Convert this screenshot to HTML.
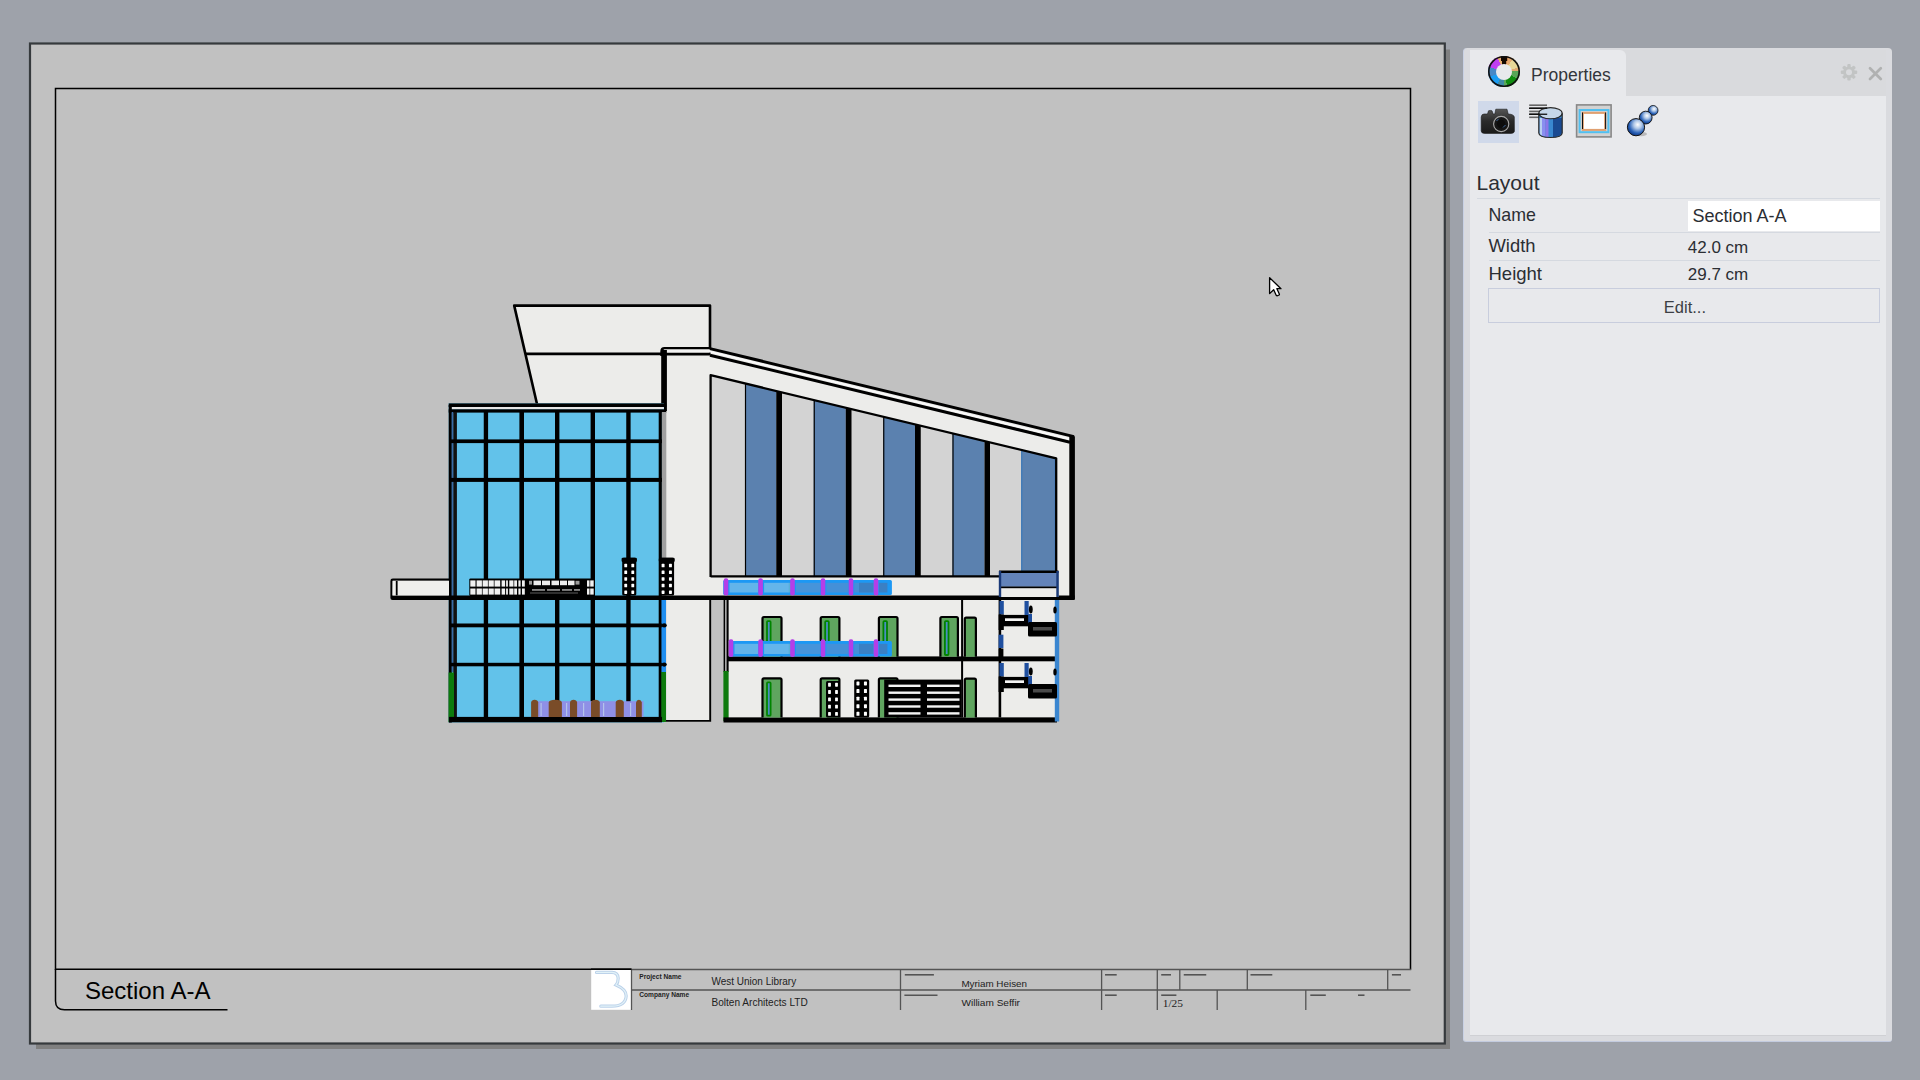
<!DOCTYPE html>
<html><head><meta charset="utf-8">
<style>
html,body{margin:0;padding:0;}
body{width:1920px;height:1080px;overflow:hidden;background:#9ea2aa;position:relative;font-family:"Liberation Sans",sans-serif;}
.abs{position:absolute;}
#panel{left:1463px;top:48px;width:428px;height:993px;background:#dadbdf;border-radius:4px 4px 3px 3px;border-left:1px solid #c9d1e4;border-bottom:1.5px solid #c3cbdf;}
#tabbar{left:1470px;top:50px;width:416px;height:46px;background:#d9dadd;}
#tab{left:1470px;top:50px;width:156px;height:46px;background:#e8e9ec;border-radius:0 6px 0 0;}
#content{left:1470px;top:96px;width:416px;height:939px;background:#e8e9ec;box-shadow:0 1px 0 #cfd0d4;}
.t{position:absolute;white-space:nowrap;color:#2b2e33;}
</style></head>
<body>
<svg class="abs" style="left:0;top:0" width="1920" height="1080" viewBox="0 0 1920 1080">
  <!-- paper shadow -->
  <rect x="36" y="49.5" width="1414" height="999.5" fill="#808080"/>
  <!-- paper -->
  <rect x="30" y="43.5" width="1414.8" height="1000" fill="#c1c1c1" stroke="#363a3d" stroke-width="2.2"/>
  <!-- inner frame -->
  <path d="M631.5 969.2 H55.5 V88.5 H1410.5 V969.6" fill="none" stroke="#000" stroke-width="1.5"/>
  <g id="building">
<path d="M514.2 305.6 L710 305.6 L710 352 L662 352 L662 405 L537 405 Z" fill="#ececea"/>
<path d="M537 404 L514.2 305.6 L710 305.6 L710 349" fill="none" stroke="#000" stroke-width="2.6" stroke-linejoin="round"/>
<path d="M525.2 353.8 L662 353.8" stroke="#000" stroke-width="2.8"/>
<path d="M662 349 L710 349 L1073.8 436.6 L1073.8 598 L662 598 Z" fill="#ececea"/>
<path d="M710.6 375.2 L1056.2 458.3 L1056.2 576.3 L710.6 576.3 Z" fill="#d3d3d3"/>
<path d="M745 383.47 L776.25 390.99 L776.25 576.3 L745 576.3 Z" fill="#5b81af"/>
<path d="M745.5 383.47 V576.3" stroke="#000" stroke-width="1.2"/>
<path d="M813.75 400.00 L845.75 407.70 L845.75 576.3 L813.75 576.3 Z" fill="#5b81af"/>
<path d="M814.25 400.00 V576.3" stroke="#000" stroke-width="1.2"/>
<path d="M883.25 416.71 L915 424.35 L915 576.3 L883.25 576.3 Z" fill="#5b81af"/>
<path d="M883.75 416.71 V576.3" stroke="#000" stroke-width="1.2"/>
<path d="M952.5 433.37 L984.5 441.06 L984.5 576.3 L952.5 576.3 Z" fill="#5b81af"/>
<path d="M953.0 433.37 V576.3" stroke="#000" stroke-width="1.2"/>
<path d="M1021.25 449.90 L1055.2 458.06 L1055.2 576.3 L1021.25 576.3 Z" fill="#5b81af"/>
<path d="M1021.75 449.90 V576.3" stroke="#3a78b8" stroke-width="1.2"/>
<path d="M776.25 390.99 L782 392.37 L782 576.3 L776.25 576.3 Z" fill="#000"/>
<path d="M845.75 407.70 L851.5 409.08 L851.5 576.3 L845.75 576.3 Z" fill="#000"/>
<path d="M915 424.35 L920.75 425.73 L920.75 576.3 L915 576.3 Z" fill="#000"/>
<path d="M984.5 441.06 L990 442.38 L990 576.3 L984.5 576.3 Z" fill="#000"/>
<path d="M1055.4 458.01 V576" stroke="#2f6fb8" stroke-width="1.4"/>
<path d="M710.6 577 V375.2 L1056.2 458.3 L1056.2 576.3 L710.6 576.3" fill="none" stroke="#000" stroke-width="2.3" stroke-linejoin="round"/>
<path d="M710 348.6 L1074 436.6" stroke="#000" stroke-width="3"/>
<path d="M710 355.2 L1070 442.2" stroke="#000" stroke-width="3"/>
<path d="M710.3 351.8 L1070 439.2" stroke="#fafafa" stroke-width="1.8"/>
<path d="M1072.1 436.2 V599" stroke="#000" stroke-width="5.6"/>
<path d="M711 348.3 H664.5 Q661.5 348.3 661.5 351.5 V356" fill="none" stroke="#000" stroke-width="2.4"/>
<path d="M662 353.9 H710.5" stroke="#000" stroke-width="3"/>
<rect x="663.5" y="349.5" width="46.5" height="2.9" rx="1.2" fill="#f2f2f2"/>
<rect x="661.20" y="350.00" width="5.70" height="61.00" fill="#000" />
<rect x="448.70" y="403.30" width="215.30" height="319.20" fill="#62c2ea" />
<rect x="448.70" y="403.40" width="217.60" height="3.60" fill="#000" />
<rect x="451.20" y="407.00" width="212.60" height="2.40" fill="#e6e6e6" />
<rect x="448.70" y="409.30" width="217.60" height="3.30" fill="#000" />
<rect x="448.70" y="405.00" width="3.10" height="317.50" fill="#000" />
<rect x="451.80" y="412.00" width="1.50" height="260.00" fill="#3a6aa8" />
<rect x="453.30" y="412.00" width="3.60" height="310.00" fill="#111" />
<rect x="483.75" y="412.00" width="4.35" height="310.00" fill="#000" />
<rect x="519.40" y="412.00" width="4.60" height="310.00" fill="#000" />
<rect x="555.00" y="412.00" width="4.40" height="310.00" fill="#000" />
<rect x="590.60" y="412.00" width="4.40" height="310.00" fill="#000" />
<rect x="626.25" y="412.00" width="4.35" height="310.00" fill="#000" />
<rect x="658.70" y="412.00" width="3.20" height="310.00" fill="#000" />
<rect x="661.90" y="412.00" width="4.40" height="185.00" fill="#a0a0a0" />
<rect x="661.50" y="600.00" width="4.50" height="72.00" fill="#1f8ef0" />
<rect x="661.30" y="672.00" width="4.70" height="50.00" fill="#0d7a0d" />
<rect x="448.60" y="672.50" width="5.40" height="49.50" fill="#0d7a0d" />
<rect x="449.00" y="439.40" width="212.90" height="3.70" fill="#000" />
<rect x="449.00" y="477.90" width="212.90" height="4.00" fill="#000" />
<rect x="449.00" y="623.50" width="212.90" height="3.80" fill="#000" />
<rect x="449.00" y="662.80" width="212.90" height="3.50" fill="#000" />
<rect x="449.00" y="716.90" width="213.00" height="5.40" fill="#000" />
<path d="M392.5 595.4 H1074.7 V600.1 H392.5 Q390.4 600.1 390.4 598 V581 Q390.4 578.6 392.8 578.6 H450 V580.8 H392.8 Z" fill="#000"/>
<rect x="392.50" y="580.80" width="56.50" height="14.60" fill="#efefed" />
<rect x="395.80" y="581.00" width="1.80" height="14.40" fill="#000" />
<rect x="666.30" y="600.00" width="44.00" height="121.50" fill="#ececea" />
<path d="M666 720.9 H710.2 V600" fill="none" stroke="#000" stroke-width="1.9"/>
<ellipse cx="664.2" cy="625.4" rx="2.6" ry="2.1" fill="#000"/>
<ellipse cx="664.2" cy="664.6" rx="2.6" ry="2.1" fill="#000"/>
<rect x="728.30" y="600.00" width="328.70" height="117.50" fill="#ececea" />
<rect x="723.60" y="600.00" width="1.90" height="72.00" fill="#000" />
<rect x="725.50" y="600.00" width="1.10" height="72.00" fill="#f0f0f0" />
<rect x="726.50" y="600.00" width="2.10" height="72.00" fill="#000" />
<rect x="723.40" y="671.00" width="5.20" height="50.00" fill="#0d7a0d" />
<rect x="728.00" y="656.40" width="327.00" height="4.90" fill="#000" />
<rect x="723.50" y="717.40" width="333.50" height="5.10" fill="#000" />
<rect x="961.10" y="600.00" width="2.00" height="117.50" fill="#000" />
<rect x="999.00" y="571.00" width="59.50" height="26.00" fill="#ececea" />
<rect x="999.00" y="570.50" width="59.50" height="2.50" fill="#000" />
<rect x="1000.50" y="573.00" width="56.50" height="13.80" fill="#6383b9" />
<rect x="1000.50" y="586.50" width="56.50" height="1.70" fill="#000" />
<rect x="998.80" y="571.00" width="2.40" height="26.00" fill="#1a3a78" />
<rect x="1056.30" y="571.00" width="2.50" height="26.00" fill="#1a3a78" />
<rect x="998.60" y="600.00" width="2.60" height="117.50" fill="#000" />
<rect x="999.40" y="601.00" width="4.40" height="13.50" fill="#1f4f9f" />
<rect x="998.60" y="614.50" width="5.20" height="15.50" fill="#000" />
<rect x="998.60" y="634.70" width="4.80" height="13.30" fill="#1f4f9f" />
<rect x="998.60" y="648.50" width="4.80" height="9.10" fill="#000" />
<rect x="999.40" y="663.00" width="4.40" height="13.50" fill="#1f4f9f" />
<rect x="998.60" y="676.50" width="5.20" height="15.50" fill="#000" />
<rect x="1054.80" y="600.00" width="4.40" height="121.50" fill="#3a86d0" />
<rect x="999.80" y="614.90" width="29.50" height="11.40" fill="#000" />
<rect x="1005.00" y="618.30" width="19.00" height="2.70" fill="#f4f4f4" />
<rect x="1024.50" y="601.00" width="4.20" height="14.00" fill="#1f4f9f" />
<rect x="1028.20" y="614.00" width="3.80" height="11.00" fill="#1f4f9f" />
<rect x="1028" y="622" width="29" height="14.5" rx="1.5" fill="#000"/>
<rect x="1033.00" y="627.00" width="19.00" height="3.50" fill="#4a4a4a" />
<ellipse cx="1030.8" cy="609.5" rx="1.9" ry="4" fill="#000"/>
<ellipse cx="1055" cy="610" rx="1.7" ry="3.5" fill="#000"/>
<rect x="999.80" y="676.90" width="29.50" height="11.40" fill="#000" />
<rect x="1005.00" y="680.30" width="19.00" height="2.70" fill="#f4f4f4" />
<rect x="1024.50" y="663.00" width="4.20" height="14.00" fill="#1f4f9f" />
<rect x="1028.20" y="676.00" width="3.80" height="11.00" fill="#1f4f9f" />
<rect x="1028" y="684" width="29" height="14.5" rx="1.5" fill="#000"/>
<rect x="1033.00" y="689.00" width="19.00" height="3.50" fill="#4a4a4a" />
<ellipse cx="1030.8" cy="671.5" rx="1.9" ry="4" fill="#000"/>
<ellipse cx="1055" cy="672" rx="1.7" ry="3.5" fill="#000"/>
<path d="M762.5 656.8 V618.4 Q762.5 617.0 763.9 617.0 H780.1 Q781.5 617.0 781.5 618.4 V656.8" fill="#5fa55f" stroke="#000" stroke-width="2.2"/>
<rect x="767.0" y="621.1" width="3.6" height="33.89999999999998" rx="0.8" fill="#4a8ec0" stroke="#008400" stroke-width="1.8"/>
<path d="M820.7 656.8 V618.4 Q820.7 617.0 822.1 617.0 H838.0 Q839.4 617.0 839.4 618.4 V656.8" fill="#5fa55f" stroke="#000" stroke-width="2.2"/>
<rect x="825.2" y="621.1" width="3.6" height="33.89999999999998" rx="0.8" fill="#4a8ec0" stroke="#008400" stroke-width="1.8"/>
<path d="M878.9 656.8 V618.4 Q878.9 617.0 880.3 617.0 H896.1 Q897.5 617.0 897.5 618.4 V656.8" fill="#5fa55f" stroke="#000" stroke-width="2.2"/>
<rect x="883.4" y="621.1" width="3.6" height="33.89999999999998" rx="0.8" fill="#4a8ec0" stroke="#008400" stroke-width="1.8"/>
<path d="M940.4 656.8 V618.4 Q940.4 617.0 941.8 617.0 H956.5 Q957.9 617.0 957.9 618.4 V656.8" fill="#5fa55f" stroke="#000" stroke-width="2.2"/>
<rect x="944.9" y="621.1" width="3.6" height="33.89999999999998" rx="0.8" fill="#4a8ec0" stroke="#008400" stroke-width="1.8"/>
<path d="M964.8000000000001 656.8 V619.0 Q964.8000000000001 617.6 966.2 617.6 H974.5 Q975.9 617.6 975.9 619.0 V656.8" fill="#5fa55f" stroke="#000" stroke-width="2.2"/>
<path d="M762.5 717.5 V679.7 Q762.5 678.3000000000001 763.9 678.3000000000001 H780.1 Q781.5 678.3000000000001 781.5 679.7 V717.5" fill="#5fa55f" stroke="#000" stroke-width="2.2"/>
<rect x="767.0" y="682.4000000000001" width="3.6" height="33.299999999999955" rx="0.8" fill="#4a8ec0" stroke="#008400" stroke-width="1.8"/>
<path d="M820.7 717.5 V679.7 Q820.7 678.3000000000001 822.1 678.3000000000001 H838.0 Q839.4 678.3000000000001 839.4 679.7 V717.5" fill="#5fa55f" stroke="#000" stroke-width="2.2"/>
<path d="M878.9 717.5 V679.7 Q878.9 678.3000000000001 880.3 678.3000000000001 H896.1 Q897.5 678.3000000000001 897.5 679.7 V717.5" fill="#5fa55f" stroke="#000" stroke-width="2.2"/>
<path d="M964.8000000000001 717.5 V680.1 Q964.8000000000001 678.7 966.2 678.7 H974.5 Q975.9 678.7 975.9 680.1 V717.5" fill="#5fa55f" stroke="#000" stroke-width="2.2"/>
<rect x="826" y="681" width="14" height="36.5" rx="1.5" fill="#000"/>
<rect x="828.10" y="682.83" width="2.80" height="3.80" rx="0.6" fill="#fff"/>
<rect x="828.10" y="690.12" width="2.80" height="3.80" rx="0.6" fill="#fff"/>
<rect x="828.10" y="697.43" width="2.80" height="3.80" rx="0.6" fill="#fff"/>
<rect x="828.10" y="704.73" width="2.80" height="3.80" rx="0.6" fill="#fff"/>
<rect x="828.10" y="712.03" width="2.80" height="3.80" rx="0.6" fill="#fff"/>
<rect x="835.10" y="682.83" width="2.80" height="3.80" rx="0.6" fill="#fff"/>
<rect x="835.10" y="690.12" width="2.80" height="3.80" rx="0.6" fill="#fff"/>
<rect x="835.10" y="697.43" width="2.80" height="3.80" rx="0.6" fill="#fff"/>
<rect x="835.10" y="704.73" width="2.80" height="3.80" rx="0.6" fill="#fff"/>
<rect x="835.10" y="712.03" width="2.80" height="3.80" rx="0.6" fill="#fff"/>
<rect x="854.2" y="679.6" width="15.0" height="37.89999999999998" rx="1.5" fill="#000"/>
<rect x="856.45" y="681.50" width="3.00" height="3.94" rx="0.6" fill="#fff"/>
<rect x="856.45" y="689.08" width="3.00" height="3.94" rx="0.6" fill="#fff"/>
<rect x="856.45" y="696.65" width="3.00" height="3.94" rx="0.6" fill="#fff"/>
<rect x="856.45" y="704.24" width="3.00" height="3.94" rx="0.6" fill="#fff"/>
<rect x="856.45" y="711.81" width="3.00" height="3.94" rx="0.6" fill="#fff"/>
<rect x="863.95" y="681.50" width="3.00" height="3.94" rx="0.6" fill="#fff"/>
<rect x="863.95" y="689.08" width="3.00" height="3.94" rx="0.6" fill="#fff"/>
<rect x="863.95" y="696.65" width="3.00" height="3.94" rx="0.6" fill="#fff"/>
<rect x="863.95" y="704.24" width="3.00" height="3.94" rx="0.6" fill="#fff"/>
<rect x="863.95" y="711.81" width="3.00" height="3.94" rx="0.6" fill="#fff"/>
<rect x="622.2" y="557.7" width="14.099999999999909" height="37.799999999999955" rx="1.5" fill="#000"/>
<rect x="621.6" y="557.7" width="15.299999999999908" height="4.2" rx="1.2" fill="#000"/>
<rect x="624.32" y="563.87" width="2.82" height="3.46" rx="0.6" fill="#fff"/>
<rect x="624.32" y="570.52" width="2.82" height="3.46" rx="0.6" fill="#fff"/>
<rect x="624.32" y="577.18" width="2.82" height="3.46" rx="0.6" fill="#fff"/>
<rect x="624.32" y="583.85" width="2.82" height="3.46" rx="0.6" fill="#fff"/>
<rect x="624.32" y="590.50" width="2.82" height="3.46" rx="0.6" fill="#fff"/>
<rect x="631.37" y="563.87" width="2.82" height="3.46" rx="0.6" fill="#fff"/>
<rect x="631.37" y="570.52" width="2.82" height="3.46" rx="0.6" fill="#fff"/>
<rect x="631.37" y="577.18" width="2.82" height="3.46" rx="0.6" fill="#fff"/>
<rect x="631.37" y="583.85" width="2.82" height="3.46" rx="0.6" fill="#fff"/>
<rect x="631.37" y="590.50" width="2.82" height="3.46" rx="0.6" fill="#fff"/>
<rect x="659.4" y="557.7" width="14.700000000000045" height="37.799999999999955" rx="1.5" fill="#000"/>
<rect x="658.8" y="557.7" width="15.900000000000045" height="4.2" rx="1.2" fill="#000"/>
<rect x="661.61" y="563.87" width="2.94" height="3.46" rx="0.6" fill="#fff"/>
<rect x="661.61" y="570.52" width="2.94" height="3.46" rx="0.6" fill="#fff"/>
<rect x="661.61" y="577.18" width="2.94" height="3.46" rx="0.6" fill="#fff"/>
<rect x="661.61" y="583.85" width="2.94" height="3.46" rx="0.6" fill="#fff"/>
<rect x="661.61" y="590.50" width="2.94" height="3.46" rx="0.6" fill="#fff"/>
<rect x="668.96" y="563.87" width="2.94" height="3.46" rx="0.6" fill="#fff"/>
<rect x="668.96" y="570.52" width="2.94" height="3.46" rx="0.6" fill="#fff"/>
<rect x="668.96" y="577.18" width="2.94" height="3.46" rx="0.6" fill="#fff"/>
<rect x="668.96" y="583.85" width="2.94" height="3.46" rx="0.6" fill="#fff"/>
<rect x="668.96" y="590.50" width="2.94" height="3.46" rx="0.6" fill="#fff"/>
<rect x="884.20" y="679.60" width="77.10" height="37.90" fill="#000" />
<rect x="888.50" y="684.60" width="32.00" height="2.40" fill="#f4f4f4" />
<rect x="927.00" y="684.60" width="32.50" height="2.40" fill="#f4f4f4" />
<rect x="888.50" y="691.50" width="32.00" height="2.40" fill="#f4f4f4" />
<rect x="927.00" y="691.50" width="32.50" height="2.40" fill="#f4f4f4" />
<rect x="888.50" y="698.40" width="32.00" height="2.40" fill="#f4f4f4" />
<rect x="927.00" y="698.40" width="32.50" height="2.40" fill="#f4f4f4" />
<rect x="888.50" y="705.30" width="32.00" height="2.40" fill="#f4f4f4" />
<rect x="927.00" y="705.30" width="32.50" height="2.40" fill="#f4f4f4" />
<rect x="888.50" y="712.20" width="32.00" height="2.40" fill="#f4f4f4" />
<rect x="927.00" y="712.20" width="32.50" height="2.40" fill="#f4f4f4" />
<rect x="723.2" y="580" width="168.69999999999993" height="15" rx="1.5" fill="#1c98f4"/>
<rect x="729.50" y="582.8" width="28.60" height="9.7" fill="#62b4ea"/>
<rect x="764.10" y="582.8" width="24.90" height="9.7" fill="#64b5ea"/>
<rect x="788.70" y="582.8" width="2.80" height="9.7" fill="#58b0d8"/>
<rect x="796.00" y="582.8" width="24.00" height="9.7" fill="#4694da"/>
<rect x="826.50" y="582.8" width="22.00" height="9.7" fill="#4490d8"/>
<rect x="854.20" y="582.8" width="19.30" height="9.7" fill="#4490d8"/>
<rect x="859.00" y="582.8" width="14.50" height="9.7" fill="#3a80c4"/>
<rect x="879.00" y="582.8" width="8.40" height="9.7" fill="#3a80c4"/>
<rect x="723.7" y="578.2" width="4.6" height="17.3" rx="2" fill="#b43ee8"/>
<rect x="758.3000000000001" y="578.2" width="4.6" height="17.3" rx="2" fill="#b43ee8"/>
<rect x="790.2" y="578.2" width="4.6" height="17.3" rx="2" fill="#b43ee8"/>
<rect x="820.7" y="578.2" width="4.6" height="17.3" rx="2" fill="#b43ee8"/>
<rect x="848.7" y="578.2" width="4.6" height="17.3" rx="2" fill="#b43ee8"/>
<rect x="873.7" y="578.2" width="4.6" height="17.3" rx="2" fill="#b43ee8"/>
<rect x="729" y="641" width="162.89999999999998" height="15.5" rx="1.5" fill="#1c98f4"/>
<rect x="734.50" y="643.8" width="23.60" height="10.2" fill="#62b4ea"/>
<rect x="764.10" y="643.8" width="24.90" height="10.2" fill="#64b5ea"/>
<rect x="788.70" y="643.8" width="2.80" height="10.2" fill="#58b0d8"/>
<rect x="796.00" y="643.8" width="24.00" height="10.2" fill="#4694da"/>
<rect x="826.50" y="643.8" width="22.00" height="10.2" fill="#4490d8"/>
<rect x="854.20" y="643.8" width="19.30" height="10.2" fill="#4490d8"/>
<rect x="859.00" y="643.8" width="14.50" height="10.2" fill="#3a80c4"/>
<rect x="879.00" y="643.8" width="8.40" height="10.2" fill="#3a80c4"/>
<rect x="728.7" y="639.2" width="4.6" height="17.8" rx="2" fill="#b43ee8"/>
<rect x="758.3000000000001" y="639.2" width="4.6" height="17.8" rx="2" fill="#b43ee8"/>
<rect x="790.2" y="639.2" width="4.6" height="17.8" rx="2" fill="#b43ee8"/>
<rect x="820.7" y="639.2" width="4.6" height="17.8" rx="2" fill="#b43ee8"/>
<rect x="848.7" y="639.2" width="4.6" height="17.8" rx="2" fill="#b43ee8"/>
<rect x="873.7" y="639.2" width="4.6" height="17.8" rx="2" fill="#b43ee8"/>
<rect x="469.3" y="578.4" width="125" height="17.5" rx="1.2" fill="#000"/>
<rect x="470.30" y="580.40" width="5.20" height="6.20" fill="#f0f0f0" />
<rect x="470.30" y="588.50" width="5.20" height="6.10" fill="#f0f0f0" />
<rect x="476.60" y="580.40" width="5.30" height="6.20" fill="#f0f0f0" />
<rect x="476.60" y="588.50" width="5.30" height="6.10" fill="#f0f0f0" />
<rect x="482.60" y="580.40" width="5.30" height="6.20" fill="#f0f0f0" />
<rect x="482.60" y="588.50" width="5.30" height="6.10" fill="#f0f0f0" />
<rect x="488.60" y="580.40" width="5.20" height="6.20" fill="#f0f0f0" />
<rect x="488.60" y="588.50" width="5.20" height="6.10" fill="#f0f0f0" />
<rect x="494.50" y="580.40" width="5.70" height="6.20" fill="#f0f0f0" />
<rect x="494.50" y="588.50" width="5.70" height="6.10" fill="#f0f0f0" />
<rect x="501.60" y="580.40" width="3.50" height="6.20" fill="#f0f0f0" />
<rect x="501.60" y="588.50" width="3.50" height="6.10" fill="#f0f0f0" />
<rect x="506.10" y="580.40" width="1.80" height="6.20" fill="#f0f0f0" />
<rect x="506.10" y="588.50" width="1.80" height="6.10" fill="#f0f0f0" />
<rect x="509.30" y="580.40" width="4.20" height="6.20" fill="#f0f0f0" />
<rect x="509.30" y="588.50" width="4.20" height="6.10" fill="#f0f0f0" />
<rect x="514.20" y="580.40" width="2.80" height="6.20" fill="#f0f0f0" />
<rect x="514.20" y="588.50" width="2.80" height="6.10" fill="#f0f0f0" />
<rect x="518.40" y="580.40" width="2.20" height="6.20" fill="#f0f0f0" />
<rect x="518.40" y="588.50" width="2.20" height="6.10" fill="#f0f0f0" />
<rect x="522.00" y="580.40" width="2.80" height="6.20" fill="#f0f0f0" />
<rect x="522.00" y="588.50" width="2.80" height="6.10" fill="#f0f0f0" />
<rect x="587.00" y="580.40" width="2.50" height="6.20" fill="#f0f0f0" />
<rect x="587.00" y="588.50" width="2.50" height="6.10" fill="#f0f0f0" />
<rect x="590.20" y="580.40" width="3.50" height="6.20" fill="#f0f0f0" />
<rect x="590.20" y="588.50" width="3.50" height="6.10" fill="#f0f0f0" />
<rect x="533.50" y="580.60" width="7.50" height="4.60" fill="#ececec" />
<rect x="542.00" y="580.60" width="8.00" height="4.60" fill="#ececec" />
<rect x="551.50" y="580.60" width="7.50" height="4.60" fill="#ececec" />
<rect x="560.00" y="580.60" width="7.00" height="4.60" fill="#ececec" />
<rect x="568.00" y="580.60" width="6.50" height="4.60" fill="#ececec" />
<rect x="529.00" y="580.80" width="3.00" height="3.80" fill="#9a9a9a" />
<rect x="575.50" y="580.80" width="4.00" height="3.80" fill="#9a9a9a" />
<rect x="532.00" y="589.30" width="13.00" height="1.30" fill="#bdbdbd" />
<rect x="547.00" y="589.30" width="13.00" height="1.30" fill="#bdbdbd" />
<rect x="562.00" y="589.30" width="10.00" height="1.30" fill="#bdbdbd" />
<rect x="574.00" y="589.30" width="6.00" height="1.30" fill="#bdbdbd" />
<rect x="530.00" y="592.60" width="48.00" height="0.80" fill="#777" />
<rect x="535.20" y="701.20" width="108.30" height="15.80" fill="#8f90e6" />
<rect x="540.50" y="703.00" width="1.20" height="13.00" fill="#b4c4ea" />
<rect x="566.00" y="703.00" width="1.20" height="13.00" fill="#b4c4ea" />
<rect x="583.00" y="703.00" width="1.20" height="13.00" fill="#b4c4ea" />
<rect x="603.00" y="703.00" width="1.20" height="13.00" fill="#b4c4ea" />
<rect x="630.00" y="703.00" width="1.20" height="13.00" fill="#b4c4ea" />
<path d="M531.1 717 V702.5 Q531.6 699.8 534.6500000000001 699.8 Q537.7 699.8 538.2 702.5 V717 Z" fill="#7a4c28"/>
<path d="M548.7 717 V702.5 Q549.2 699.8 555.3 699.8 Q561.4 699.8 561.9 702.5 V717 Z" fill="#7a4c28"/>
<path d="M570 717 V702.5 Q570.5 699.8 573.55 699.8 Q576.6 699.8 577.1 702.5 V717 Z" fill="#7a4c28"/>
<path d="M591 717 V702.5 Q591.5 699.8 595.4 699.8 Q599.3 699.8 599.8 702.5 V717 Z" fill="#7a4c28"/>
<path d="M615.7 717 V702.5 Q616.2 699.8 619.75 699.8 Q623.3 699.8 623.8 702.5 V717 Z" fill="#7a4c28"/>
<path d="M636 717 V702.5 Q636.5 699.8 638.9 699.8 Q641.3 699.8 641.8 702.5 V717 Z" fill="#7a4c28"/>

</g>
  <g id="titleblock">
<path d="M55.5 969 V1001 Q55.5 1009.8 64.5 1009.8 H227.5" fill="none" stroke="#000" stroke-width="1.5"/>
<text x="85" y="999.2" font-family="Liberation Sans" font-size="24" fill="#000">Section A-A</text>
<rect x="591.2" y="970" width="39.8" height="39.8" fill="#fff"/>
<path d="M596.5 972.4 H612 Q618 972.6 618.2 978.2 Q618.2 982.5 616 985 Q626.5 989.5 626.2 996 Q625.5 1006.2 612 1006.2 H600.8" fill="none" stroke="#bcd2ea" stroke-width="3.2" stroke-linecap="round"/>
<path d="M596.5 972.4 H612 Q618 972.6 618.2 978.2 Q618.2 982.5 616 985 Q626.5 989.5 626.2 996 Q625.5 1006.2 612 1006.2 H600.8" fill="none" stroke="#e2f2f8" stroke-width="1.2" stroke-linecap="round"/>
<path d="M631.5 970 V1010 M631.5 990 H1410.5 M900.5 970 V1010 M1101.6 970 V1010 M1157.3 970 V1010 M1179.8 970 V990 M1247.3 970 V990 M1387.7 970 V990 M1217.2 990 V1010 M1305.8 990 V1010" stroke="#545454" stroke-width="1.3"/>
<path d="M631.5 969.5 H1411.2" stroke="#545454" stroke-width="1.3"/>
<path d="M591 969.2 H631.5" stroke="#000" stroke-width="1.5"/>
<path d="M904.8 974.8 H933.9" stroke="#545454" stroke-width="1.6"/>
<path d="M904.4 995.2 H937.5" stroke="#545454" stroke-width="1.6"/>
<path d="M1105 974.8 H1116.7" stroke="#545454" stroke-width="1.6"/>
<path d="M1105 995.2 H1116.7" stroke="#545454" stroke-width="1.6"/>
<path d="M1161.2 974.8 H1171" stroke="#545454" stroke-width="1.6"/>
<path d="M1183.75 974.8 H1206.25" stroke="#545454" stroke-width="1.6"/>
<path d="M1250.5 974.8 H1272.3" stroke="#545454" stroke-width="1.6"/>
<path d="M1391.9 974.8 H1401" stroke="#545454" stroke-width="1.6"/>
<path d="M1161.2 995.2 H1176.4" stroke="#545454" stroke-width="1.6"/>
<path d="M1310.3 995.2 H1325.8" stroke="#545454" stroke-width="1.6"/>
<path d="M1358 995.2 H1364.5" stroke="#545454" stroke-width="1.6"/>
<text x="639.3" y="978.9" font-family="Liberation Sans" font-weight="bold" font-size="6.6" fill="#222">Project Name</text>
<text x="639.3" y="997" font-family="Liberation Sans" font-weight="bold" font-size="6.6" fill="#222">Company Name</text>
<text x="711.5" y="985.4" font-family="Liberation Sans" font-size="10.2" fill="#222" textLength="84.7" lengthAdjust="spacingAndGlyphs">West Union Library</text>
<text x="711.5" y="1006.4" font-family="Liberation Sans" font-size="10.2" fill="#222" textLength="96.2" lengthAdjust="spacingAndGlyphs">Bolten Architects LTD</text>
<text x="961.4" y="986.7" font-family="Liberation Sans" font-size="9.8" fill="#222" textLength="65.6" lengthAdjust="spacingAndGlyphs">Myriam Heisen</text>
<text x="961.4" y="1006.1" font-family="Liberation Sans" font-size="9.8" fill="#222" textLength="58.6" lengthAdjust="spacingAndGlyphs">William Seffir</text>
<text x="1162.7" y="1007" font-family="Liberation Serif" font-size="9.5" fill="#222" textLength="20.3" lengthAdjust="spacingAndGlyphs">1/25</text>

</g>
<g id="cursor"><path d="M1269.6 277.6 V293.6 L1273.7 289.7 L1276.3 295.4 Q1276.8 296 1277.5 295.7 L1279 295 Q1279.6 294.6 1279.3 293.9 L1276.9 288.7 L1281 288.7 Z" fill="#fff" stroke="#000" stroke-width="1.3" stroke-linejoin="round"/></g>
</svg>

<div id="panel" class="abs"></div>
<div id="tabbar" class="abs"></div>
<div id="tab" class="abs"></div>
<div id="content" class="abs"></div>



<!-- rhino logo -->
<div class="abs" style="left:1488.3px;top:56px;width:31.4px;height:31.4px;border-radius:50%;background:conic-gradient(from 0deg,#140800 0deg 13deg,#c08050 13deg 18deg,#e6aa72 18deg 35deg,#e8d898 35deg 75deg,#e0a870 75deg 88deg,#58a658 88deg 118deg,#108c10 118deg 168deg,#5aa85a 168deg 180deg,#3f8aa6 180deg 208deg,#1a9cf2 208deg 250deg,#4688c6 250deg 287deg,#c03ef2 287deg 335deg,#e6aa72 335deg 347deg,#140800 347deg 360deg);box-shadow:inset 0 0 0 1.6px #111;"></div>
<div class="abs" style="left:1495.7px;top:63.8px;width:16px;height:16px;border-radius:50%;background:#e8e9ec;"></div>
<!-- camera highlight -->
<div class="abs" style="left:1477.7px;top:101px;width:41.5px;height:41.7px;background:#d0d9ea;"></div>
<svg class="abs" style="left:0;top:0;overflow:visible" width="1" height="1">
  <defs>
    <linearGradient id="camg" x1="0" y1="0" x2="0" y2="1"><stop offset="0" stop-color="#555"/><stop offset="0.5" stop-color="#2a2a2a"/><stop offset="1" stop-color="#1a1a1a"/></linearGradient>
    <radialGradient id="ballg" cx="0.6" cy="0.35" r="0.65"><stop offset="0" stop-color="#ffffff"/><stop offset="0.35" stop-color="#b0c8e8"/><stop offset="0.75" stop-color="#2a62b8"/><stop offset="1" stop-color="#103a88"/></radialGradient>
  </defs>
  <!-- camera -->
  <path d="M1487.5 114 L1488.5 110.8 Q1490.2 110 1492 110.8 L1493.2 114 L1494.8 114 L1495.8 109.2 L1507 109.2 L1508.2 114 Q1513.8 114.3 1514.3 117 L1514.4 131.5 Q1514 133.4 1511 133.4 L1484.5 133.4 Q1481.3 133.4 1481.2 131 L1481.2 117 Q1481.6 114 1484 114 Z" fill="url(#camg)" stroke="#1a1a1a" stroke-width="0.6"/>
  <circle cx="1501.2" cy="124" r="7.6" fill="#151515" stroke="#a8a8a8" stroke-width="1.1"/>
  <circle cx="1501.2" cy="124" r="4.2" fill="#0c0c0c"/>
  <path d="M1496.5 121 l2.2 -2.2 M1503 127.5 l2.5 -2.5" stroke="#5080c0" stroke-width="1" opacity="0.8"/>
  <!-- cylinder icon -->
  <g>
    <rect x="1529.2" y="104.4" width="17.8" height="1.6" fill="#666"/>
    <rect x="1529.2" y="107.6" width="17.8" height="1.4" fill="#111"/>
    <rect x="1529.2" y="110.6" width="17.8" height="1.6" fill="#666"/>
    <rect x="1529.2" y="113.6" width="17.8" height="1.4" fill="#111"/>
    <rect x="1529.2" y="116.5" width="17.8" height="1.6" fill="#666"/>
    <path d="M1538.8 113.5 L1538.8 133 Q1539 137.4 1550.5 137.5 Q1562 137.4 1562.2 133 L1562.2 113.5 Z" fill="#3a88d0"/>
    <path d="M1539.5 118 L1539.5 133.5 Q1541 135.5 1542 135.8 L1542 118 Z" fill="#b8d0f0"/>
    <path d="M1542 118 L1545.5 118 L1545.5 136.7 Q1543.5 136.3 1542 135.8 Z" fill="#8a8ef0"/>
    <path d="M1545.5 118 L1548.5 118 L1548.5 137.3 Q1547 137.1 1545.5 136.7 Z" fill="#8c76e8"/>
    <path d="M1553 118 L1562 118 L1562 133 Q1561 136.5 1553 137.3 Z" fill="#1a4a92"/>
    <ellipse cx="1550.5" cy="113.2" rx="11.5" ry="5.4" fill="#c4d6e8"/>
    <path d="M1538.8 113.2 L1538.8 133 Q1539 137.4 1550.5 137.5 Q1562 137.4 1562.2 133 L1562.2 113.2" fill="none" stroke="#2a2a2a" stroke-width="1.2"/>
    <ellipse cx="1550.5" cy="113.2" rx="11.7" ry="5.6" fill="none" stroke="#2a2a2a" stroke-width="1.1"/>
    <rect x="1529.2" y="107.6" width="18" height="1.3" fill="#111"/>
    <rect x="1529.2" y="113.6" width="18" height="1.3" fill="#111"/>
  </g>
  <!-- frame icon -->
  <rect x="1576.6" y="104.9" width="34.5" height="32" fill="#d2d2d2" stroke="#888" stroke-width="1.6"/>
  <rect x="1579.6" y="110" width="28.8" height="22.2" fill="none" stroke="#52c0f0" stroke-width="2"/>
  <rect x="1582.9" y="112.9" width="22.2" height="17" fill="#fff" stroke="#e0a070" stroke-width="2"/>
  <path d="M1582.5 112.5 V129 M1605.6 112.5 V129" stroke="#111" stroke-width="1"/>
  <!-- balls icon -->
  <ellipse cx="1641" cy="134" rx="6" ry="2.2" fill="#999" opacity="0.6"/>
  <circle cx="1653.1" cy="110.4" r="4.9" fill="url(#ballg)" stroke="#111" stroke-width="0.8"/>
  <circle cx="1645.7" cy="117.6" r="6.4" fill="url(#ballg)" stroke="#111" stroke-width="0.9"/>
  <circle cx="1636" cy="127.2" r="8.6" fill="url(#ballg)" stroke="#111" stroke-width="1"/>
  <!-- gear -->
  <g transform="translate(1849 72.3)" fill="#c2c4c4">
    <circle r="5.9"/>
    <g><rect x="-1.7" y="-8.2" width="3.4" height="16.4" rx="1"/><rect x="-1.7" y="-8.2" width="3.4" height="16.4" rx="1" transform="rotate(45)"/><rect x="-1.7" y="-8.2" width="3.4" height="16.4" rx="1" transform="rotate(90)"/><rect x="-1.7" y="-8.2" width="3.4" height="16.4" rx="1" transform="rotate(135)"/></g>
    <circle r="3" fill="#d9dadd"/>
  </g>
  <!-- close X -->
  <path d="M1870 68.3 L1880.8 79 M1880.8 68.3 L1870 79" stroke="#b0b1b1" stroke-width="2.7" stroke-linecap="round"/>
</svg>

<div class="t" style="left:1531px;top:66.9px;font-size:17.5px;line-height:17.5px;color:#33363b;">Properties</div>
<div class="t" style="left:1476.5px;top:171.8px;font-size:21px;line-height:21px;">Layout</div>
<div class="abs" style="left:1477px;top:198px;width:403px;height:1px;background:#d5d9e0;"></div>
<div class="abs" style="left:1687.5px;top:200.5px;width:192.5px;height:30px;background:#ffffff;"></div>
<div class="t" style="left:1488.5px;top:206.7px;font-size:17.8px;line-height:17.8px;">Name</div>
<div class="t" style="left:1692.5px;top:206.6px;font-size:18px;line-height:18px;">Section A-A</div>
<div class="abs" style="left:1488.5px;top:232px;width:391px;height:1px;background:#d5d9e0;"></div>
<div class="t" style="left:1488.5px;top:237.4px;font-size:18.4px;line-height:18.4px;">Width</div>
<div class="t" style="left:1687.8px;top:238.6px;font-size:17px;line-height:17px;">42.0 cm</div>
<div class="abs" style="left:1488.5px;top:259.5px;width:391px;height:1px;background:#d5d9e0;"></div>
<div class="t" style="left:1488.5px;top:265.0px;font-size:18.5px;line-height:18.5px;">Height</div>
<div class="t" style="left:1687.8px;top:266.4px;font-size:17px;line-height:17px;">29.7 cm</div>
<div class="abs" style="left:1488px;top:288px;width:390px;height:33px;border:1px solid #c8cddd;"></div>
<div class="t" style="left:1663.8px;top:299.2px;font-size:16.5px;line-height:16.5px;color:#3c3f44;">Edit...</div>

</body></html>
